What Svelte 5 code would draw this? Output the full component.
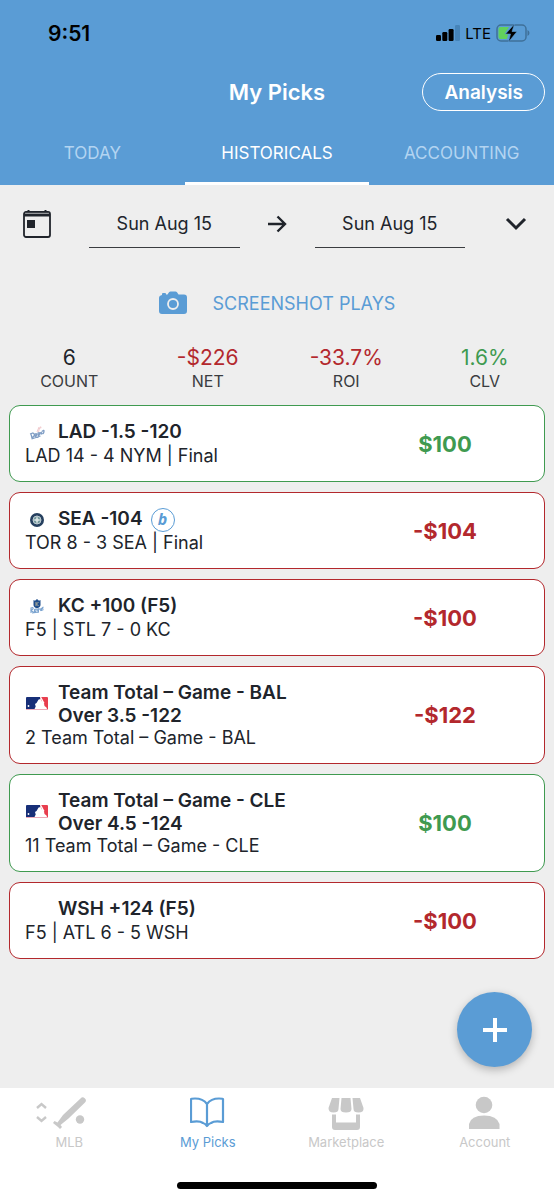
<script>
  let tab = $state('Historicals');
  let from = $state('Sun Aug 15');
  let to = $state('Sun Aug 15');

  const tabs = ['Today', 'Historicals', 'Accounting'];

  const stats = [
    { value: '6', label: 'Count', tone: '' },
    { value: '-$226', label: 'Net', tone: 'loss' },
    { value: '-33.7%', label: 'ROI', tone: 'loss' },
    { value: '1.6%', label: 'CLV', tone: 'win' }
  ];

  const picks = [
    { logo: 'lad', title: ['LAD -1.5 -120'], sub: 'LAD 14 - 4 NYM | Final', amount: 100 },
    { logo: 'sea', title: ['SEA -104'], badge: true, sub: 'TOR 8 - 3 SEA | Final', amount: -104 },
    { logo: 'kc', title: ['KC +100 (F5)'], sub: 'F5 | STL 7 - 0 KC', amount: -100 },
    { logo: 'mlb', title: ['Team Total – Game - BAL', 'Over 3.5 -122'], sub: '2 Team Total – Game - BAL', amount: -122 },
    { logo: 'mlb', title: ['Team Total – Game - CLE', 'Over 4.5 -124'], sub: '11 Team Total – Game - CLE', amount: 100 },
    { logo: '', title: ['WSH +124 (F5)'], sub: 'F5 | ATL 6 - 5 WSH', amount: -100 }
  ];

  const nav = ['MLB', 'My Picks', 'Marketplace', 'Account'];

  // -104 → "-$104"
  function fmtMoney(n) {
    return (n < 0 ? '-$' : '$') + Math.abs(n);
  }
</script>

<div class="page">
  <header>
    <div class="status">
      <span class="clock">9:51</span>
      <div class="status-right">
        <svg width="24" height="16" viewBox="0 0 24 16" aria-hidden="true">
          <rect x="0" y="10" width="5" height="6" rx="1.2" />
          <rect x="6.300" y="7" width="5" height="9" rx="1.2" />
          <rect x="12.600" y="4" width="5" height="12" rx="1.2" />
          <rect x="19" y="0" width="5" height="16" rx="1.2" fill="#4684b9" />
        </svg>
        <span class="lte">LTE</span>
        <svg width="34" height="18" viewBox="0 0 34 18" aria-hidden="true">
          <rect x="1" y="1" width="29" height="16" rx="4" fill="none" stroke="#3f7099" stroke-width="1.500" />
          <path d="M4.500 3H13L8.500 10H12L11 15H4.500a2 2 0 0 1-2-2V5a2 2 0 0 1 2-2z" fill="#62d15c" />
          <path d="M31.500 6q2 1 2 3t-2 3z" fill="#3f7099" />
          <path d="M18.500 0L9.500 10h5l-2 8L21 7.500h-5z" stroke="#5a9cd5" stroke-width=".600" />
        </svg>
      </div>
    </div>

    <div class="title-row">
      <h1>My Picks</h1>
      <button class="analysis">Analysis</button>
    </div>

    <div class="tabs" role="tablist">
      {#each tabs as name}
        <button role="tab" aria-selected={tab === name} class:active={tab === name} onclick={() => (tab = name)}>
          {name}
        </button>
      {/each}
    </div>
  </header>

  <main>
    <div class="dates">
      <svg width="28" height="28" viewBox="0 0 28 28" aria-hidden="true">
        <rect x="1" y="2" width="26" height="25" rx="2" fill="none" stroke="#20242b" stroke-width="1.800" />
        <path d="M1 3.500h26v3H1z" fill="#20242b" />
        <path d="M5.500 0v3M22.500 0v3" stroke="#20242b" stroke-width="2" />
        <path d="M2 3.200h24" stroke="#a5a7aa" stroke-width=".700" />
        <rect x="4" y="10" width="8" height="8" fill="#20242b" />
      </svg>
      <input type="text" readonly aria-label="From" bind:value={from} />
      <svg class="arrow" width="20" height="18" viewBox="0 0 20 18" fill="none" stroke="#20242b" stroke-width="2.400" aria-hidden="true">
        <path d="M1 9h17M10.500 1.500L18 9l-7.500 7.500" />
      </svg>
      <input type="text" readonly aria-label="To" bind:value={to} />
      <button class="expand" aria-label="More filters">
        <svg width="22" height="14" viewBox="0 0 22 14" fill="none" stroke="#20242b" stroke-width="3">
          <path d="M2 2l9 9 9-9" />
        </svg>
      </button>
    </div>

    <button class="screenshot">
      <svg width="28" height="24" viewBox="0 0 28 24" aria-hidden="true">
        <path d="M3 4V3q0-1 1-1h2q1 0 1 1v.500h1.500L10 1.200Q10.600.500 11.500.500h5q.900 0 1.500.700L19.500 3.500H25q3 0 3 3V20q0 3-3 3H3q-3 0-3-3V7q0-2.500 3-3z" fill="#5a9cd5" />
        <circle cx="14" cy="13" r="5" fill="none" stroke="#eee" stroke-width="1.800" />
      </svg>
      Screenshot plays
    </button>

    <dl class="stats">
      {#each stats as s}
        <div class="stat">
          <dt>{s.label}</dt>
          <dd class={s.tone}>{s.value}</dd>
        </div>
      {/each}
    </dl>

    <ul class="picks">
      {#each picks as p}
        <li class={p.amount < 0 ? 'loss' : 'win'}>
          <div class="info">
            <div class="head">
              <span class="logo">
                {#if p.logo === 'lad'}
                  <svg width="16" height="14" viewBox="0 0 16 14">
                    <path d="M8 6l2-5M9.500 6l1-4M10.500 2l1.500-1" stroke="#e9b3b8" stroke-width=".700" />
                    <circle cx="11.500" cy="1.500" r="1" fill="#f3cdd0" />
                    <path d="M1 8l3-1q2 1 1 3l-2 2M2 8l1 4M6 8q2-1 1.500 1T6 10zM9 7q2-1 1.500 1T9 9zM10 10q-1 2-2 1M11 7l2-1M11.500 8l2-.500M13 5.500q2-2 2-.500t-1 3M2.500 13l9-3" fill="none" stroke="#7f9dc4" stroke-width="1.300" />
                  </svg>
                {:else if p.logo === 'sea'}
                  <svg width="14" height="14" viewBox="0 0 14 14">
                    <circle cx="7" cy="7" r="7" fill="#26405f" />
                    <circle cx="7" cy="7" r="4" fill="#75989c" stroke="#d3dce2" stroke-width=".800" />
                    <path d="M7 2.500l1 3.500 3.500 1L8 8l-1 3.500L6 8 2.500 7 6 6z" fill="#d9e4e4" />
                  </svg>
                {:else if p.logo === 'kc'}
                  <svg width="14" height="15" viewBox="0 0 14 15">
                    <path d="M3.500 1l1.500.700L7 0l2 1.700 1.500-.700v5q0 2-3.500 3.500Q3.500 8 3.500 6z" fill="#214f8c" />
                    <path d="M6 3v4M8.500 3L6.500 5l2 2" fill="none" stroke="#d6c59b" stroke-width=".800" />
                    <path d="M1 14V9q3-1 2 1L1 11.500l3 2M4.500 10.500q2-1 1.500 1t-1.500 1zM7 10l1 2 1-3-1 5M9.500 10.500l2-1-1 2.500M11.500 9v3M13.500 8q-2 1-1 1.500t0 2M2 14l7-1" fill="none" stroke="#7da5d0" stroke-width="1.100" />
                  </svg>
                {:else if p.logo === 'mlb'}
                  <svg width="22" height="14" viewBox="0 0 22 14">
                    <path d="M0 1q0-1 1-1h13v12H0z" fill="#172f78" />
                    <path d="M14 0h7q1 0 1 1v11h-5z" fill="#e83e4e" />
                    <path d="M14 0h1.200l3.300 6-1.500 1z" fill="#fff" />
                    <path d="M8.500 12l1.200-2.500-.700-2.500 1.500-1 1.500-2.500q.500-1.500 2-1.300t1.500 1.800l2.500 2.500.5 2.500 2 1.500.5 1.500z" fill="#fff" />
                    <circle cx="2.500" cy="9" r=".900" fill="#fff" />
                    <path d="M0 12.500h22" stroke="#ecaab8" stroke-width="1" />
                  </svg>
                {/if}
              </span>
              <div class="title">
                {#each p.title as line}
                  <div>{line}</div>
                {/each}
              </div>
              {#if p.badge}
                <span class="badge">b</span>
              {/if}
            </div>
            <div class="sub">{p.sub}</div>
          </div>
          <div class="amount">{fmtMoney(p.amount)}</div>
        </li>
      {/each}
    </ul>

    <button class="fab" aria-label="Add pick">
      <svg width="24" height="24" viewBox="0 0 24 24" stroke="#fff" stroke-width="4">
        <path d="M12 0v24M0 12h24" />
      </svg>
    </button>
  </main>

  <footer>
    <nav>
      {#each nav as item}
        <a href="#{item}" class:current={item === 'My Picks'}>
          {#if item === 'MLB'}
            <svg width="68" height="36" viewBox="0 0 68 36">
              <g fill="none" stroke="currentColor" stroke-width="2.400">
                <path d="M2 13l4.500-4 4.500 4M2 22l4.500 4 4.500-4" />
              </g>
              <path d="M45.500 3.500a2.900 2.900 0 0 1 4.500 4L33.500 23.500l-8 6.500 1.500 2-2 2-2-2-5-4 1.500-2 3 1.500 5.500-7.500z" fill="currentColor" />
              <circle cx="45" cy="24.500" r="4.200" fill="currentColor" />
            </svg>
          {:else if item === 'My Picks'}
            <svg width="36" height="36" viewBox="0 0 36 36" fill="none" stroke="currentColor" stroke-width="2.200" stroke-linejoin="round">
              <path d="M17 9Q13 3.500 5 3.500q-4.500 0-4 1V27q8.500-1.500 12 1 2 .500 4 3 2-2.500 4-3 3.500-2.500 12-1V4.500q.500-1-4-1Q21 3.500 17 9zV30" />
            </svg>
          {:else if item === 'Marketplace'}
            <svg width="36" height="36" viewBox="0 0 36 36" fill="currentColor">
              <path d="M4 3h7.500l-1 11q0 3.500-5 3.500T.500 13zM13.500 3h9l1 11q0 3.500-5.500 3.500T12.500 14zM24.500 3H32l3.500 10q.500 4.500-5 4.500-5 0-5-3.500z" />
              <path d="M4 19.500h4v8h20v-8h4V32q0 3-3 3H7q-3 0-3-3z" />
            </svg>
          {:else}
            <svg width="36" height="36" viewBox="0 0 36 36" fill="currentColor">
              <circle cx="17" cy="10" r="8.300" />
              <path d="M2 34v-5Q4 20.500 17 20.500T32.500 29v5z" />
            </svg>
          {/if}
          <span>{item}</span>
        </a>
      {/each}
    </nav>
    <div class="home-bar"></div>
  </footer>
</div>

<style>
  :global(body) {
    margin: 0;
    background: #eee;
  }

  .page {
    min-height: 100vh;
    display: flex;
    flex-direction: column;
    font-family: Inter, 'Liberation Sans', sans-serif;
    color: #20242b;
    background: #eee;
  }

  button,
  input {
    font: inherit;
    color: inherit;
    background: none;
    border: 0;
    border-radius: 0;
    padding: 0;
    margin: 0;
  }

  header {
    background: #5a9cd5;
    color: #fff;
  }

  .status {
    display: flex;
    justify-content: space-between;
    align-items: center;
    height: 66px;
    padding: 0 24px 0 48px;
    color: #000;
  }

  .clock {
    font-size: 21px;
    font-weight: 600;
  }

  .status-right {
    display: flex;
    align-items: center;
    gap: 5px;
  }

  .lte {
    font-size: 15px;
    font-weight: 400;
  }

  .title-row {
    display: grid;
    grid-template-columns: 1fr auto 1fr;
    align-items: center;
    padding: 7px 9px 8px;
  }

  h1 {
    grid-column: 2;
    margin: 0;
    font-size: 22px;
    font-weight: 600;
  }

  .analysis {
    justify-self: end;
    height: 38px;
    padding: 0 21px;
    border: 1px solid #fff;
    border-radius: 19px;
    font-size: 19px;
    font-weight: 600;
  }

  .tabs {
    display: flex;
  }

  .tabs button {
    flex: 1;
    height: 66px;
    padding-top: 4px;
    border-bottom: 3px solid transparent;
    font-size: 17px;
    text-transform: uppercase;
    color: #b3d4f1;
  }

  .tabs button.active {
    color: #fff;
    border-color: #fff;
  }

  main {
    position: relative;
    flex: 1;
  }

  .dates {
    display: grid;
    grid-template-columns: 66px 1fr 75px 1fr 62px;
    align-items: center;
    height: 48px;
    padding: 14px 27px 0 23px;
  }

  .dates input {
    width: 100%;
    height: 48px;
    border-bottom: 1px solid #3a3c40;
    font-size: 18px;
    text-align: center;
  }

  .arrow {
    justify-self: center;
  }

  .expand {
    display: flex;
    justify-self: end;
  }

  .screenshot {
    display: flex;
    align-items: center;
    justify-content: center;
    gap: 26px;
    width: 100%;
    height: 40px;
    margin-top: 36px;
    font-size: 18px;
    text-transform: uppercase;
    color: #5a9cd5;
  }

  .stats {
    display: flex;
    margin: 22px 0 14px;
  }

  .stat {
    flex: 1;
    display: flex;
    flex-direction: column-reverse;
    text-align: center;
  }

  dt {
    font-size: 16px;
    line-height: 20px;
    text-transform: uppercase;
    color: #3a3c40;
  }

  dd {
    margin: 0;
    font-size: 21px;
    line-height: 26px;
  }

  .loss {
    color: #b3282d;
    border-color: #b3282d;
  }

  .win {
    color: #3f9a50;
    border-color: #3f9a50;
  }

  .picks {
    display: flex;
    flex-direction: column;
    gap: 10px;
    margin: 0;
    padding: 0 9px;
    list-style: none;
  }

  li {
    display: flex;
    align-items: center;
    padding: 14px 0 14px 15px;
    border-width: 1px;
    border-style: solid;
    border-radius: 11px;
    background: #fff;
  }

  .info {
    flex: 2;
    color: #20242b;
    font-size: 18px;
  }

  .head {
    display: flex;
    align-items: center;
    min-height: 25px;
  }

  .logo {
    display: flex;
    justify-content: center;
    width: 23px;
    margin-right: 10px;
  }

  .title {
    align-self: flex-start;
    font-size: 19px;
    font-weight: 600;
    line-height: 23px;
  }

  .badge {
    box-sizing: border-box;
    width: 24px;
    height: 24px;
    margin-left: 8px;
    border: 1px solid #5a9cd5;
    border-radius: 50%;
    font: italic 700 16px/21px 'Open Sans', sans-serif;
    text-align: center;
    color: #5a9cd5;
  }

  .sub {
    line-height: 22px;
  }

  .amount {
    flex: 1;
    padding-right: 15px;
    font-size: 22px;
    font-weight: 700;
    text-align: center;
  }

  .fab {
    position: absolute;
    right: 22px;
    bottom: 21px;
    display: flex;
    align-items: center;
    justify-content: center;
    width: 75px;
    height: 75px;
    border-radius: 50%;
    background: #5a9cd5;
    box-shadow: 0 3px 8px rgba(0, 0, 0, 0.25);
  }

  footer {
    background: #fff;
  }

  nav {
    display: flex;
    padding-top: 7px;
  }

  nav a {
    flex: 1;
    display: flex;
    flex-direction: column;
    align-items: center;
    gap: 2px;
    font-size: 13px;
    line-height: 18px;
    text-decoration: none;
    color: #c8c8c8;
  }

  nav a.current {
    color: #5a9cd5;
  }

  .home-bar {
    width: 36%;
    height: 7px;
    margin: 31px auto 11px;
    border-radius: 4px;
    background: #000;
  }
</style>
